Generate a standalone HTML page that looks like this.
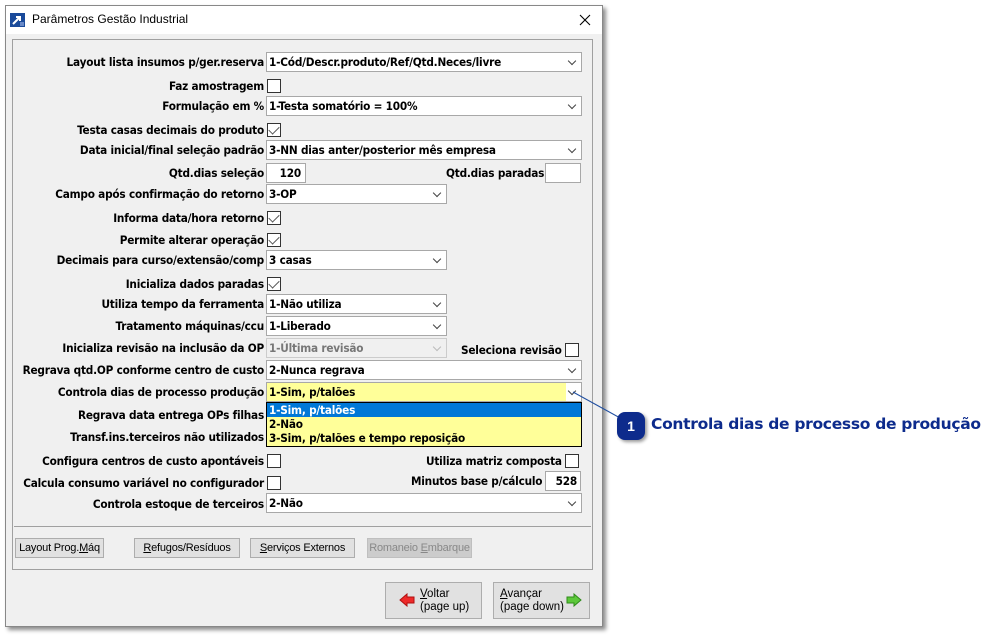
<!DOCTYPE html>
<html><head><meta charset="utf-8"><style>
*{margin:0;padding:0;box-sizing:border-box}
body{width:1004px;height:635px;background:#fff;position:relative;overflow:hidden;font-family:"DejaVu Sans Condensed","Liberation Sans",sans-serif}
.win{position:absolute;left:5px;top:5px;width:598px;height:622px;background:#f0f0f0;border:1px solid #888;box-shadow:3px 3px 4px rgba(0,0,0,.45)}
.title{position:absolute;left:0;top:0;width:596px;height:28px;background:#fff}
.title span{position:absolute;left:26px;top:6px;font-family:"Liberation Sans",sans-serif;font-size:12px;color:#000}
.panel{position:absolute;left:6px;top:33px;width:581px;height:531px;border:1px solid #a0a0a0}
.a{position:absolute}
.l{position:absolute;right:740px;font-size:11.7px;font-weight:bold;color:#000;white-space:nowrap;letter-spacing:-0.2px}
.lr{position:absolute;font-size:11.7px;font-weight:bold;white-space:nowrap;letter-spacing:-0.2px}
.cb{position:absolute;background:#fff;border:1px solid #a8a8a8;height:20px;font-size:11.7px;font-weight:bold;padding:2px 0 0 2px;white-space:nowrap;letter-spacing:-0.2px}
.cb i{position:absolute;right:6px;top:5px;width:6px;height:6px;border-right:1px solid #444;border-bottom:1px solid #444;transform:rotate(45deg)}
.chk{position:absolute;width:14px;height:14px;background:#fff;border:1px solid #333}
.chk.c::after{content:"";position:absolute;left:3px;top:0px;width:5px;height:9px;border-right:1.3px solid #555;border-bottom:1.3px solid #555;transform:rotate(45deg)}
.btn{position:absolute;height:20px;top:538px;background:#e1e1e1;border:1px solid #adadad;font-family:"Liberation Sans",sans-serif;font-size:11px;letter-spacing:-0.2px;text-align:center;line-height:18px;color:#000;white-space:nowrap;overflow:hidden}
.bb{position:absolute;top:582px;height:37px;width:97px;background:#e1e1e1;border:1px solid #adadad;font-family:"Liberation Sans",sans-serif;font-size:11.5px;line-height:13px;color:#000;white-space:nowrap}
</style></head><body>
<div class="win">
<div class="title">
<svg class="a" style="left:4px;top:7px" width="15" height="14"><rect width="15" height="14" fill="#1a4a9a"/><path d="M3 11 L10 4 M6 4 H10 V8" stroke="#fff" stroke-width="2" fill="none"/><rect x="10" y="9" width="4" height="4" fill="#6a8ac8"/></svg>
<span>Parâmetros Gestão Industrial</span>
<svg class="a" style="left:573px;top:8px" width="12" height="12"><path d="M1 1 L11 11 M11 1 L1 11" stroke="#000" stroke-width="1.1"/></svg>
</div>
<div class="panel"></div>
</div>

<div class="l" style="top:55px">Layout lista insumos p/ger.reserva</div>
<div class="cb" style="left:266px;top:52px;width:316px">1-Cód/Descr.produto/Ref/Qtd.Neces/livre<i></i></div>
<div class="l" style="top:79px">Faz amostragem</div><div class="chk" style="left:267px;top:79px"></div>
<div class="l" style="top:99px">Formulação em %</div>
<div class="cb" style="left:266px;top:96px;width:316px">1-Testa somatório = 100%<i></i></div>
<div class="l" style="top:123px">Testa casas decimais do produto</div><div class="chk c" style="left:267px;top:123px"></div>
<div class="l" style="top:143px">Data inicial/final seleção padrão</div>
<div class="cb" style="left:266px;top:140px;width:316px">3-NN dias anter/posterior mês empresa<i></i></div>
<div class="l" style="top:166px">Qtd.dias seleção</div>
<div class="cb" style="left:266px;top:163px;width:40px;text-align:right;padding-right:4px">120</div>
<div class="lr" style="left:446px;top:166px">Qtd.dias paradas</div>
<div class="cb" style="left:545px;top:163px;width:36px"></div>
<div class="l" style="top:187px">Campo após confirmação do retorno</div>
<div class="cb" style="left:266px;top:184px;width:181px">3-OP<i></i></div>
<div class="l" style="top:211px">Informa data/hora retorno</div><div class="chk c" style="left:267px;top:211px"></div>
<div class="l" style="top:233px">Permite alterar operação</div><div class="chk c" style="left:267px;top:233px"></div>
<div class="l" style="top:253px">Decimais para curso/extensão/comp</div>
<div class="cb" style="left:266px;top:250px;width:181px">3 casas<i></i></div>
<div class="l" style="top:277px">Inicializa dados paradas</div><div class="chk c" style="left:267px;top:277px"></div>
<div class="l" style="top:297px">Utiliza tempo da ferramenta</div>
<div class="cb" style="left:266px;top:294px;width:181px">1-Não utiliza<i></i></div>
<div class="l" style="top:319px">Tratamento máquinas/ccu</div>
<div class="cb" style="left:266px;top:316px;width:181px">1-Liberado<i></i></div>
<div class="l" style="top:341px">Inicializa revisão na inclusão da OP</div>
<div class="cb" style="left:266px;top:338px;width:181px;background:#f0f0f0;color:#777;border-color:#ccc">1-Última revisão<i style="border-color:#bbb"></i></div>
<div class="lr" style="left:461px;top:343px">Seleciona revisão</div><div class="chk" style="left:565px;top:343px"></div>
<div class="l" style="top:363px">Regrava qtd.OP conforme centro de custo</div>
<div class="cb" style="left:266px;top:360px;width:316px">2-Nunca regrava<i></i></div>
<div class="l" style="top:385px">Controla dias de processo produção</div>
<div class="cb" style="left:266px;top:382px;width:316px;background:#ffff99">1-Sim, p/talões<span class="a" style="right:0;top:0;width:15px;height:18px;background:#fff"></span><i></i></div>
<div class="l" style="top:408px">Regrava data entrega OPs filhas</div>
<div class="l" style="top:430px">Transf.ins.terceiros não utilizados</div>
<div class="a" style="left:266px;top:402px;width:316px;height:45px;background:#ffff99;border:1px solid #000;font-size:11.7px;font-weight:bold;letter-spacing:-0.2px">
<div style="height:14px;background:#0078d7;color:#fff;padding-left:2px;line-height:14px">1-Sim, p/talões</div>
<div style="height:14px;padding-left:2px;line-height:14px">2-Não</div>
<div style="height:14px;padding-left:2px;line-height:14px">3-Sim, p/talões e tempo reposição</div>
</div>
<div class="l" style="top:454px">Configura centros de custo apontáveis</div><div class="chk" style="left:267px;top:454px"></div>
<div class="lr" style="left:426px;top:454px">Utiliza matriz composta</div><div class="chk" style="left:565px;top:454px"></div>
<div class="l" style="top:476px">Calcula consumo variável no configurador</div><div class="chk" style="left:267px;top:476px"></div>
<div class="lr" style="left:411px;top:474px">Minutos base p/cálculo</div>
<div class="cb" style="left:545px;top:471px;width:36px;text-align:right;padding-right:3px">528</div>
<div class="l" style="top:497px">Controla estoque de terceiros</div>
<div class="cb" style="left:266px;top:493px;width:316px">2-Não<i></i></div>

<div class="a" style="left:14px;top:526px;width:577px;height:1px;background:#a0a0a0"></div>
<div class="btn" style="left:15px;width:89px">Layout Prog.<u>M</u>áq</div>
<div class="btn" style="left:134px;width:106px"><u>R</u>efugos/Resíduos</div>
<div class="btn" style="left:250px;width:105px"><u>S</u>erviços Externos</div>
<div class="btn" style="left:367px;width:105px;background:#ccc;color:#888;border-color:#bfbfbf">Romaneio <u>E</u>mbarque</div>

<div class="bb" style="left:385px"><svg class="a" style="left:13px;top:10px" width="16" height="14"><path d="M1 7 L8 1 V4 H15 V10 H8 V13 Z" fill="#ee2a2a" stroke="#b01010"/></svg><div class="a" style="left:34px;top:5px"><u>V</u>oltar<br>(page up)</div></div>
<div class="bb" style="left:493px"><div class="a" style="left:6px;top:5px"><u>A</u>vançar<br>(page down)</div><svg class="a" style="left:72px;top:10px" width="16" height="14"><path d="M15 7 L8 1 V4 H1 V10 H8 V13 Z" fill="#5cc83a" stroke="#2f8a1a"/></svg></div>

<svg class="a" style="left:0;top:0" width="1004" height="635"><line x1="573" y1="392" x2="622" y2="419" stroke="#1f4ea0" stroke-width="1"/></svg>
<div class="a" style="left:617px;top:412px;width:28px;height:28px;border-radius:8px;background:#0d2b8c;box-shadow:2px 2px 3px rgba(0,0,0,.4);color:#fff;font-family:'Liberation Sans',sans-serif;font-weight:bold;font-size:14px;text-align:center;line-height:28px">1</div>
<div class="a" style="left:651px;top:415px;font-family:'DejaVu Sans','Liberation Sans',sans-serif;font-weight:bold;font-size:15.5px;color:#0d2b8c;white-space:nowrap;letter-spacing:-0.3px">Controla dias de processo de produção</div>
</body></html>
